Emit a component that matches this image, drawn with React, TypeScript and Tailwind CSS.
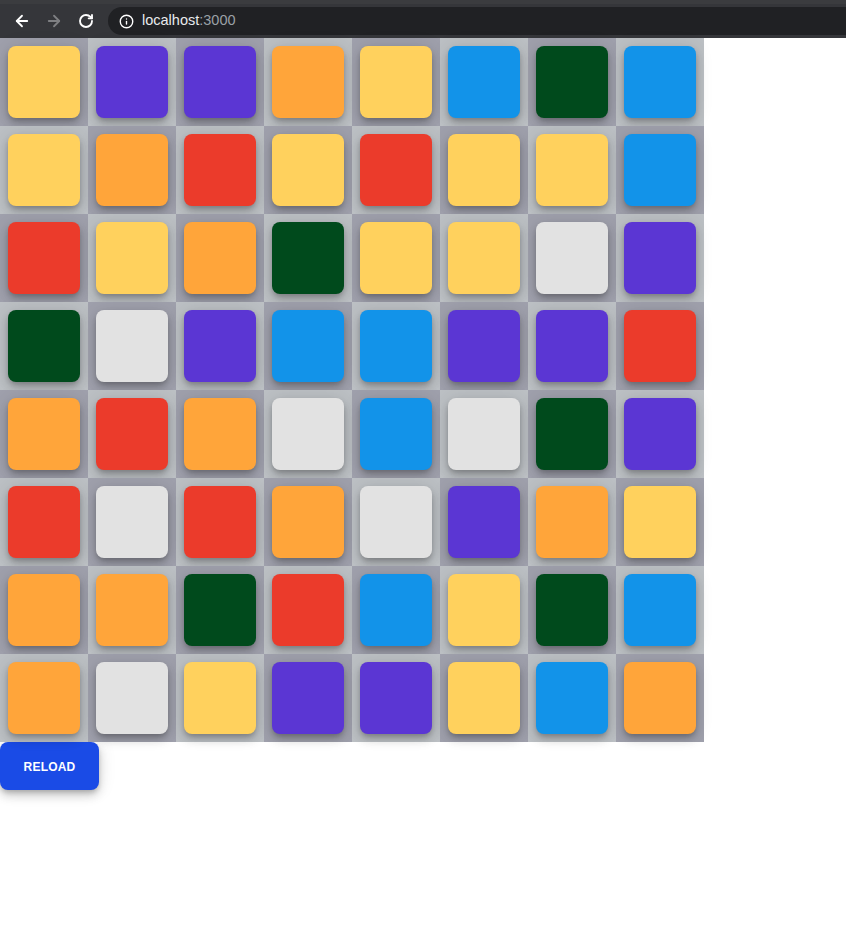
import { ArrowLeft, ArrowRight, RotateCw, Info } from "lucide-react"

// tile colours
const COLORS: Record<string, string> = {
  Y: "bg-[#ffd15d]",
  P: "bg-[#5b36d3]",
  O: "bg-[#ffa53a]",
  B: "bg-[#1293e9]",
  G: "bg-[#004a1c]",
  R: "bg-[#eb3b2b]",
  W: "bg-[#e2e2e2]",
}

const board = [
  "YPPOYBGB",
  "YORYRYYB",
  "RYOGYYWP",
  "GWPBBPPR",
  "OROWBWGP",
  "RWROWPOY",
  "OOGRBYGB",
  "OWYPPYBO",
]

function BrowserBar() {
  return (
    <div className="flex h-[38px] items-center bg-[#35363a] border-t-[4px] border-[#3b3c3f] font-['Liberation_Sans',sans-serif]">
      <div className="flex items-center pl-[13px] gap-[14px] text-white">
        <ArrowLeft size={18} strokeWidth={2.4} />
        <ArrowRight size={18} strokeWidth={2.4} className="text-[#7e7f82]" />
        <RotateCw size={16} strokeWidth={2.8} className="ml-[1px]" />
      </div>
      <div className="ml-[14px] flex h-[28px] flex-1 items-center rounded-l-full bg-[#202124] pl-[11px]">
        <Info size={15} strokeWidth={2.2} className="text-white" />
        <span className="ml-[8px] text-[14.5px] text-[#e8eaed]">
          localhost<span className="text-[#9aa0a6]">:3000</span>
        </span>
      </div>
    </div>
  )
}

export default function App() {
  return (
    <div className="min-h-[926px] bg-white">
      <BrowserBar />
      <div className="grid w-[704px] grid-cols-8">
        {board.map((row, r) =>
          row.split("").map((c, i) => (
            <div
              key={`${r}-${i}`}
              className={`flex h-[88px] w-[88px] items-center justify-center ${
                (r + i) % 2 === 0 ? "bg-[#9fa0ac]" : "bg-[#bcc0c4]"
              }`}
            >
              <div
                className={`h-[72px] w-[72px] rounded-[8px] ${COLORS[c]} shadow-[0_3px_5px_-1px_rgba(0,0,0,0.2),0_6px_10px_0_rgba(0,0,0,0.14),0_1px_18px_0_rgba(0,0,0,0.12)]`}
              />
            </div>
          ))
        )}
      </div>
      <button className="flex h-[48px] w-[99px] items-center justify-center rounded-[8px] bg-[#1a4be6] pt-[1px] text-[12px] font-bold tracking-[0.2px] text-white font-['Liberation_Sans',sans-serif] shadow-[0_3px_5px_-1px_rgba(0,0,0,0.2),0_6px_10px_0_rgba(0,0,0,0.14),0_1px_18px_0_rgba(0,0,0,0.12)]">
        RELOAD
      </button>
    </div>
  )
}
